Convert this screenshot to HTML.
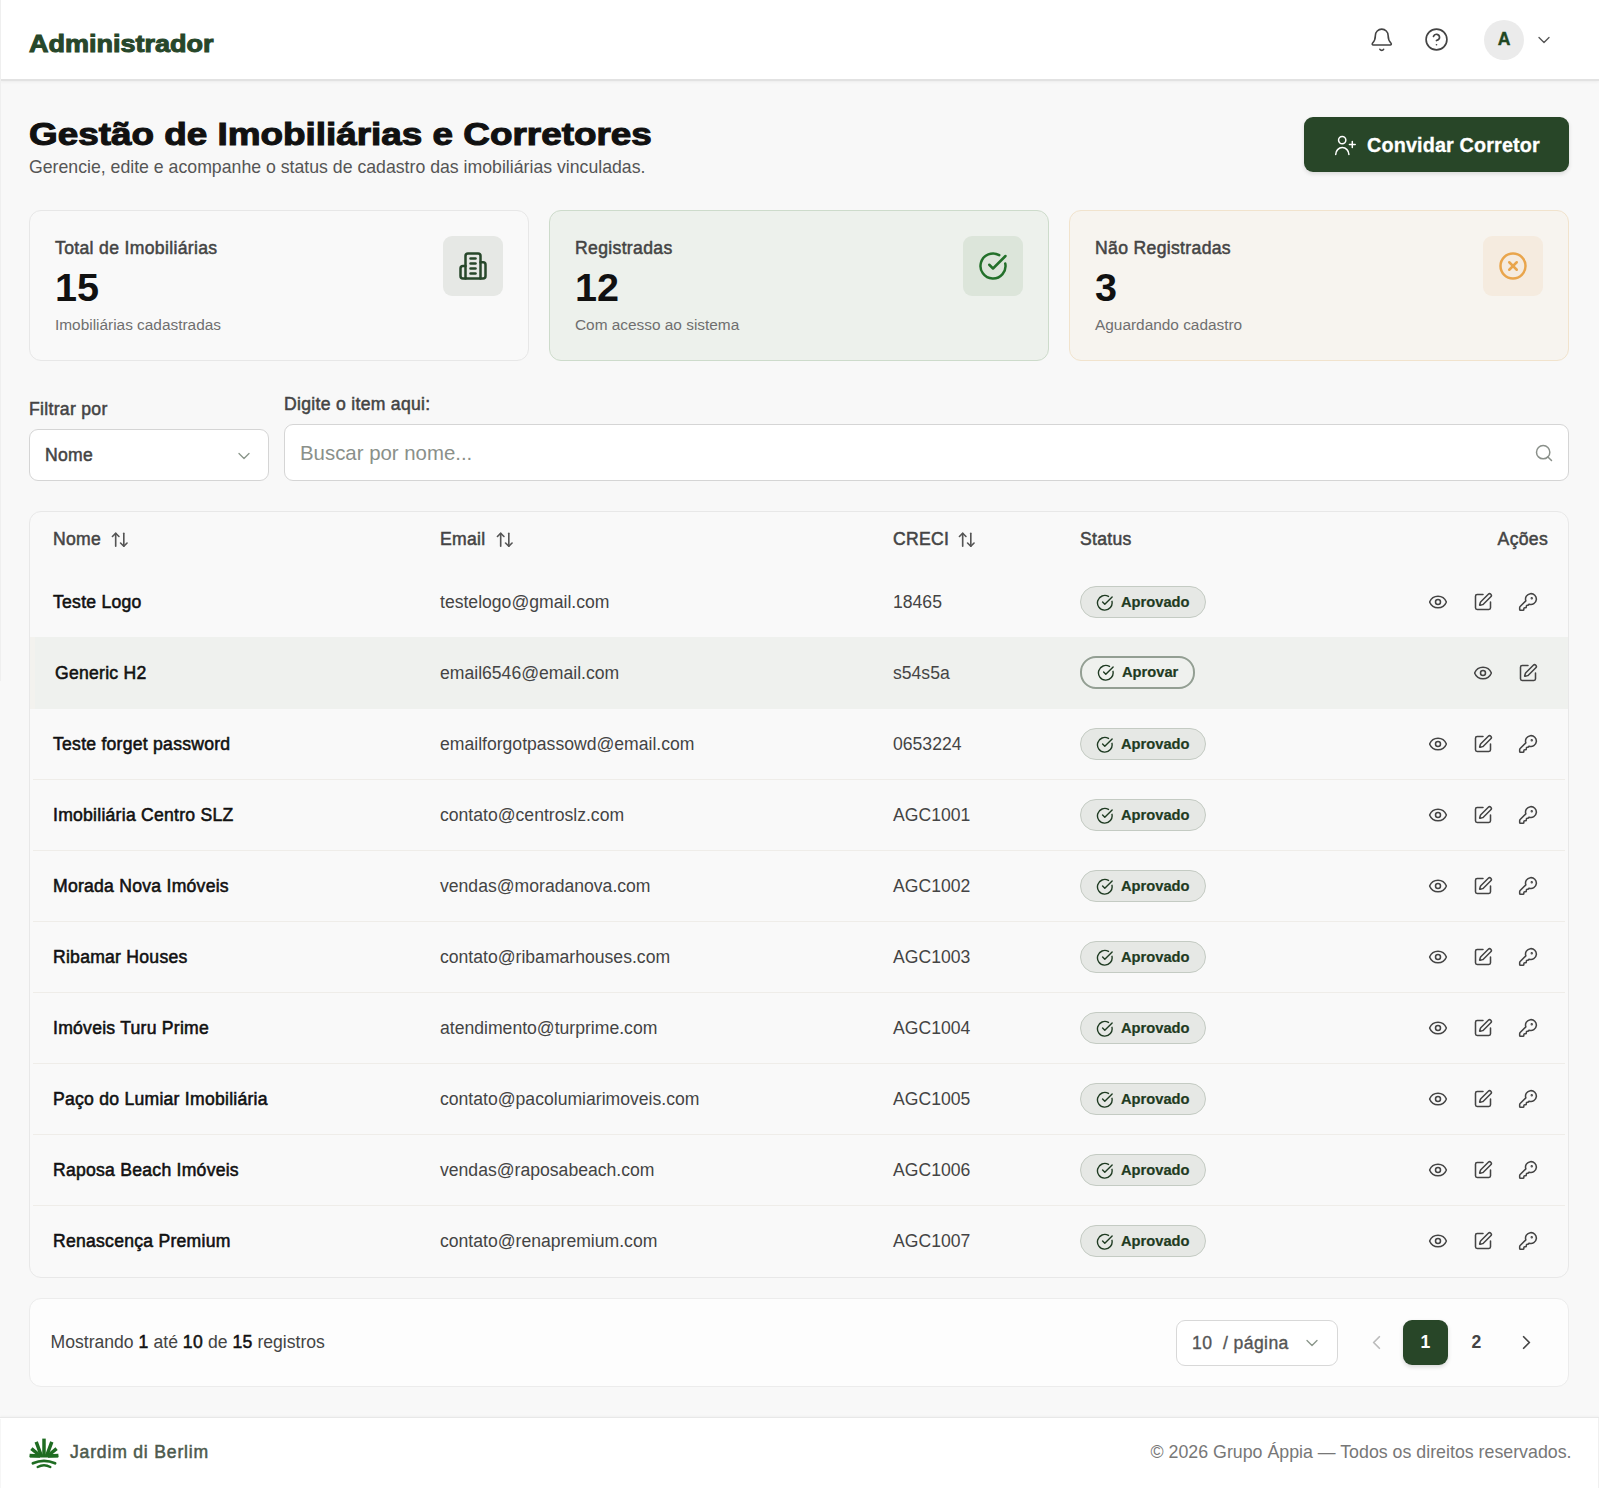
<!DOCTYPE html>
<html lang="pt-BR">
<head>
<meta charset="utf-8">
<title>Gestão de Imobiliárias e Corretores</title>
<style>
*{box-sizing:border-box;margin:0;padding:0}
html,body{width:1599px;height:1488px;overflow:hidden}
body{background:#f8f8f8;font-family:"Liberation Sans",sans-serif;color:#111;position:relative}
.lb{left:0;top:0;width:1px;height:681px;background:#efefef;z-index:5}
.abs{position:absolute}
svg{display:block}
/* header */
.hdr{left:0;top:0;width:1599px;height:81px;background:#fff;border-bottom:2px solid #e2e2e2;box-shadow:0 1px 3px rgba(0,0,0,.05)}
.brand{left:29px;top:29px;font-size:24px;font-weight:700;color:#27472a;white-space:nowrap;transform-origin:0 0;transform:scaleX(1.125);-webkit-text-stroke:1px #27472a;line-height:30px}
.avatar{left:1484px;top:20px;width:40px;height:40px;border-radius:50%;background:#ebebeb;color:#1f4722;font-weight:700;font-size:17.6px;text-align:center;line-height:39px;-webkit-text-stroke:.4px #1f4722}
/* title */
.title{left:29px;top:113.5px;font-size:32px;font-weight:700;color:#111;white-space:nowrap;transform-origin:0 0;transform:scaleX(1.152);-webkit-text-stroke:1.1px #111;line-height:40px}
.sub{left:29px;top:156px;font-size:17.7px;color:#555;white-space:nowrap;line-height:22px}
.btn{left:1304px;top:117px;width:265px;height:55px;border-radius:9px;background:#284628;color:#fff;box-shadow:0 2px 4px rgba(0,0,0,.12)}
.btn .t{position:absolute;left:63px;top:15.5px;font-size:19.8px;font-weight:700;line-height:24px;white-space:nowrap;-webkit-text-stroke:.3px #fff;letter-spacing:.15px}
/* cards */
.card{top:210px;width:500px;height:151px;border-radius:12px;border:1px solid #e7e7e7;background:#f9f9f9}
.card .lbl{position:absolute;left:25px;top:26px;font-size:17.6px;color:#444;line-height:22px;white-space:nowrap;-webkit-text-stroke:.5px #444;letter-spacing:.33px}
.card .num{position:absolute;left:25px;top:54px;font-size:39.6px;font-weight:700;color:#111;line-height:44px}
.card .cap{position:absolute;left:25px;top:104px;font-size:15.4px;color:#6f6f6f;line-height:20px;white-space:nowrap}
.card .ib{position:absolute;left:413px;top:25px;width:60px;height:60px;border-radius:9px;background:#e6e8e5}
.card .ib svg{position:absolute;left:15px;top:15px}
.c2{background:#edf1ec;border-color:#cddbcb}
.c2 .ib{background:#dce5da}
.c3{background:#f7f4ef;border-color:#f1e3cd}
.c3 .ib{background:#f5ebdf}
/* filters */
.flbl{font-size:17.6px;color:#444;line-height:22px;white-space:nowrap;-webkit-text-stroke:.5px #444;letter-spacing:.3px}
.sel{left:29px;top:429px;width:240px;height:52px;border:1px solid #d5d5d5;border-radius:9px;background:#fff}
.sel .t{position:absolute;left:15px;top:13.8px;font-size:17.6px;color:#444;line-height:22px;-webkit-text-stroke:.5px #444;letter-spacing:.3px}
.srch{left:284px;top:424px;width:1285px;height:57px;border:1px solid #d5d5d5;border-radius:9px;background:#fff}
.srch .t{position:absolute;left:15px;top:16px;font-size:20.4px;color:#8a908a;line-height:24px}
/* table */
.tbl{left:29px;top:511px;width:1540px;height:767px;border:1px solid #e8e8e8;border-radius:12px;background:#f9f9f9;overflow:hidden}
.th{position:absolute;top:16px;font-size:17.6px;color:#444;line-height:22px;white-space:nowrap;-webkit-text-stroke:.5px #444;letter-spacing:.3px}
.row{position:absolute;left:0;width:1538px;height:71px}
.sepl{position:absolute;left:3px;width:1532px;height:1px;background:#efede9}
.row.hov{background:#eff1ee;height:72px}
.cell{position:absolute;top:25px;font-size:17.6px;line-height:22px;white-space:nowrap}
.nm{left:23px;color:#111;-webkit-text-stroke:.55px #111;letter-spacing:.25px}
.em{left:410px;color:#444}
.cr{left:863px;color:#444}
.badge{position:absolute;left:1050px;top:20px;height:32px;border:1px solid #c4cbc3;border-radius:16px;background:#e6e8e5;color:#1f3b22;font-weight:700;font-size:14.7px;line-height:30px;padding-left:40px;width:126px;-webkit-text-stroke:.2px #1f3b22}
.badge svg{position:absolute;left:14.5px;top:6.5px}
.badge.ap{border:2px solid #939f93;background:transparent;width:115px;height:33px;padding-left:40px;line-height:29px;top:19px}
.badge.ap svg{left:15px;top:6px}
.act{position:absolute;top:26px}
/* pagination */
.pg{left:29px;top:1298px;width:1540px;height:89px;border:1px solid #ececec;border-radius:12px;background:#fdfdfd}
.pg .info{position:absolute;left:20.5px;top:32px;font-size:17.6px;color:#444;line-height:22px;white-space:nowrap}
.pg .info b{color:#111;font-weight:400;-webkit-text-stroke:.5px #111;letter-spacing:.3px}
.psel{position:absolute;left:1146px;top:21px;width:162px;height:46px;border:1px solid #d8d8d8;border-radius:9px;background:#fff}
.psel .t{position:absolute;left:15px;top:11px;font-size:17.6px;color:#555;line-height:22px;white-space:pre;-webkit-text-stroke:.35px #555;letter-spacing:.4px}
.pnum{position:absolute;top:21px;width:45px;height:45px;border-radius:9px;text-align:center;line-height:45px;font-size:17.6px;font-weight:700;color:#444}
.pnum.on{background:#284628;color:#fff;box-shadow:0 2px 4px rgba(0,0,0,.15)}
/* footer */
.ftr{left:0;top:1417px;width:1599px;height:71px;background:#fff;border-top:1px solid #e8e8e8;box-shadow:0 -1px 2px rgba(0,0,0,.03)}
.ftr .bn{position:absolute;left:70px;top:23px;font-size:17.6px;color:#4d5a4d;line-height:22px;white-space:nowrap;-webkit-text-stroke:.5px #4d5a4d;letter-spacing:.8px}
.ftr .cp{position:absolute;right:27.5px;top:23px;font-size:17.8px;color:#777;line-height:22px;white-space:nowrap}
</style>
</head>
<body>
<!-- HEADER -->
<div class="abs lb"></div>
<div class="abs" style="left:0;top:1419px;width:1px;height:69px;background:#f6f6f6;z-index:5"></div>
<div class="abs hdr"></div>
<div class="abs brand">Administrador</div>
<svg class="abs" style="left:1369px;top:27px" width="25.5" height="25.5" viewBox="0 0 24 24" fill="none" stroke="#444" stroke-width="1.5" stroke-linecap="round" stroke-linejoin="round"><path d="M10.27 21a2 2 0 0 0 3.46 0"/><path d="M3.26 15.33A1 1 0 0 0 4 17h16a1 1 0 0 0 .74-1.67C19.41 13.96 18 12.5 18 8A6 6 0 0 0 6 8c0 4.5-1.41 5.96-2.74 7.33"/></svg>
<svg class="abs" style="left:1424px;top:27px" width="25" height="25" viewBox="0 0 24 24" fill="none" stroke="#444" stroke-width="1.6" stroke-linecap="round" stroke-linejoin="round"><circle cx="12" cy="12" r="10"/><path d="M9.09 9a3 3 0 0 1 5.83 1c0 2-3 3-3 3"/><path d="M12 17h.01"/></svg>
<div class="abs avatar">A</div>
<svg class="abs" style="left:1534px;top:29.8px" width="20" height="20" viewBox="0 0 24 24" fill="none" stroke="#555" stroke-width="1.6" stroke-linecap="round" stroke-linejoin="round"><path d="m6 9 6 6 6-6"/></svg>

<!-- TITLE -->
<div class="abs title">Gestão de Imobiliárias e Corretores</div>
<div class="abs sub">Gerencie, edite e acompanhe o status de cadastro das imobiliárias vinculadas.</div>
<div class="abs btn">
<svg style="position:absolute;left:30px;top:18px" width="22" height="22" viewBox="0 0 22 22" fill="none" stroke="#fff" stroke-width="1.5" stroke-linecap="round" stroke-linejoin="round"><circle cx="8.2" cy="5.1" r="3.65"/><path d="M1.7 19.5A6.6 6.9 0 0 1 14.9 19.5"/><path d="M18.3 6.6v5.8M15.4 9.5h5.8"/></svg>
<div class="t">Convidar Corretor</div>
</div>

<!-- CARDS -->
<div class="abs card" style="left:29px">
<div class="lbl">Total de Imobiliárias</div>
<div class="num">15</div>
<div class="cap">Imobiliárias cadastradas</div>
<div class="ib"><svg width="30" height="30" viewBox="0 0 24 24" fill="none" stroke="#27472a" stroke-width="2" stroke-linecap="round" stroke-linejoin="round"><path d="M6 22V4a2 2 0 0 1 2-2h8a2 2 0 0 1 2 2v18Z"/><path d="M6 12H4a2 2 0 0 0-2 2v6a2 2 0 0 0 2 2h2"/><path d="M18 9h2a2 2 0 0 1 2 2v9a2 2 0 0 1-2 2h-2"/><path d="M10 6h4"/><path d="M10 10h4"/><path d="M10 14h4"/><path d="M10 18h4"/></svg></div>
</div>
<div class="abs card c2" style="left:549px">
<div class="lbl">Registradas</div>
<div class="num">12</div>
<div class="cap">Com acesso ao sistema</div>
<div class="ib"><svg width="30" height="30" viewBox="0 0 24 24" fill="none" stroke="#23702a" stroke-width="2" stroke-linecap="round" stroke-linejoin="round"><path d="M21.801 10A10 10 0 1 1 17 3.335"/><path d="m9 11 3 3L22 4"/></svg></div>
</div>
<div class="abs card c3" style="left:1069px">
<div class="lbl">Não Registradas</div>
<div class="num">3</div>
<div class="cap">Aguardando cadastro</div>
<div class="ib"><svg width="30" height="30" viewBox="0 0 24 24" fill="none" stroke="#e9a54c" stroke-width="2" stroke-linecap="round" stroke-linejoin="round"><circle cx="12" cy="12" r="10"/><path d="m15 9-6 6"/><path d="m9 9 6 6"/></svg></div>
</div>

<!-- FILTERS -->
<div class="abs flbl" style="left:29px;top:398px">Filtrar por</div>
<div class="abs flbl" style="left:284px;top:393px">Digite o item aqui:</div>
<div class="abs sel"><div class="t">Nome</div>
<svg style="position:absolute;left:204px;top:16px" width="20" height="20" viewBox="0 0 24 24" fill="none" stroke="#8a968a" stroke-width="1.6" stroke-linecap="round" stroke-linejoin="round"><path d="m6 9 6 6 6-6"/></svg></div>
<div class="abs srch"><div class="t">Buscar por nome...</div>
<svg style="position:absolute;left:1249px;top:18px" width="20" height="20" viewBox="0 0 24 24" fill="none" stroke="#8a908a" stroke-width="1.8" stroke-linecap="round" stroke-linejoin="round"><circle cx="11" cy="11" r="8"/><path d="m21 21-4.3-4.3"/></svg></div>

<!-- TABLE -->
<div class="abs tbl" id="tbl">
<div class="th" style="left:23px">Nome</div><svg style="position:absolute;left:80.2px;top:18.4px" width="19.5" height="19.5" viewBox="0 0 24 24" fill="none" stroke="#555" stroke-width="2" stroke-linecap="round" stroke-linejoin="round"><path d="m21 16-4 4-4-4"/><path d="M17 20V4"/><path d="m3 8 4-4 4 4"/><path d="M7 4v16"/></svg>
<div class="th" style="left:410px">Email</div><svg style="position:absolute;left:465.2px;top:18.4px" width="19.5" height="19.5" viewBox="0 0 24 24" fill="none" stroke="#555" stroke-width="2" stroke-linecap="round" stroke-linejoin="round"><path d="m21 16-4 4-4-4"/><path d="M17 20V4"/><path d="m3 8 4-4 4 4"/><path d="M7 4v16"/></svg>
<div class="th" style="left:863px">CRECI</div><svg style="position:absolute;left:926.5px;top:18.4px" width="19.5" height="19.5" viewBox="0 0 24 24" fill="none" stroke="#555" stroke-width="2" stroke-linecap="round" stroke-linejoin="round"><path d="m21 16-4 4-4-4"/><path d="M17 20V4"/><path d="m3 8 4-4 4 4"/><path d="M7 4v16"/></svg>
<div class="th" style="left:1050px">Status</div>
<div class="th" style="right:20px">Ações</div>
<div class="row" style="top:54px"><div class="cell nm" style="left:23px">Teste Logo</div><div class="cell em">testelogo@gmail.com</div><div class="cell cr">18465</div><div class="badge"><svg width="17.6" height="17.6" viewBox="0 0 24 24" fill="none" stroke="#1f3b22" stroke-width="1.9" stroke-linecap="round" stroke-linejoin="round"><path d="M21.801 10A10 10 0 1 1 17 3.335"/><path d="m9 11 3 3L22 4"/></svg>Aprovado</div><svg class="act" style="left:1398px" width="20" height="20" viewBox="0 0 24 24" fill="none" stroke="#444" stroke-width="1.85" stroke-linecap="round" stroke-linejoin="round"><path d="M2.062 12.348a1 1 0 0 1 0-.696 10.75 10.75 0 0 1 19.876 0 1 1 0 0 1 0 .696 10.75 10.75 0 0 1-19.876 0"/><circle cx="12" cy="12" r="3"/></svg><svg class="act" style="left:1443px" width="20" height="20" viewBox="0 0 24 24" fill="none" stroke="#444" stroke-width="1.85" stroke-linecap="round" stroke-linejoin="round"><path d="M12 3H5a2 2 0 0 0-2 2v14a2 2 0 0 0 2 2h14a2 2 0 0 0 2-2v-7"/><path d="M18.375 2.625a1 1 0 0 1 3 3l-9.013 9.014a2 2 0 0 1-.853.505l-2.873.84a.5.5 0 0 1-.62-.62l.84-2.873a2 2 0 0 1 .506-.852z"/></svg><svg class="act" style="left:1488px" width="20" height="20" viewBox="0 0 24 24" fill="none" stroke="#444" stroke-width="1.85" stroke-linecap="round" stroke-linejoin="round"><path d="M2.586 17.414A2 2 0 0 0 2 18.828V21a1 1 0 0 0 1 1h3a1 1 0 0 0 1-1v-1a1 1 0 0 1 1-1h1a1 1 0 0 0 1-1v-1a1 1 0 0 1 1-1h.172a2 2 0 0 0 1.414-.586l.814-.814a6.5 6.5 0 1 0-4-4z"/><circle cx="16.5" cy="7.5" r=".5" fill="#444"/></svg></div>
<div class="row hov" style="top:125px"><div style="position:absolute;left:0;top:0;width:5px;height:72px;background:#f3f2ee"></div><div class="cell nm" style="left:25px">Generic H2</div><div class="cell em">email6546@email.com</div><div class="cell cr">s54s5a</div><div class="badge ap"><svg width="17.6" height="17.6" viewBox="0 0 24 24" fill="none" stroke="#1f3b22" stroke-width="1.9" stroke-linecap="round" stroke-linejoin="round"><path d="M21.801 10A10 10 0 1 1 17 3.335"/><path d="m9 11 3 3L22 4"/></svg>Aprovar</div><svg class="act" style="left:1443px" width="20" height="20" viewBox="0 0 24 24" fill="none" stroke="#444" stroke-width="1.85" stroke-linecap="round" stroke-linejoin="round"><path d="M2.062 12.348a1 1 0 0 1 0-.696 10.75 10.75 0 0 1 19.876 0 1 1 0 0 1 0 .696 10.75 10.75 0 0 1-19.876 0"/><circle cx="12" cy="12" r="3"/></svg><svg class="act" style="left:1488px" width="20" height="20" viewBox="0 0 24 24" fill="none" stroke="#444" stroke-width="1.85" stroke-linecap="round" stroke-linejoin="round"><path d="M12 3H5a2 2 0 0 0-2 2v14a2 2 0 0 0 2 2h14a2 2 0 0 0 2-2v-7"/><path d="M18.375 2.625a1 1 0 0 1 3 3l-9.013 9.014a2 2 0 0 1-.853.505l-2.873.84a.5.5 0 0 1-.62-.62l.84-2.873a2 2 0 0 1 .506-.852z"/></svg></div>
<div class="row" style="top:196px"><div class="cell nm" style="left:23px">Teste forget password</div><div class="cell em">emailforgotpassowd@email.com</div><div class="cell cr">0653224</div><div class="badge"><svg width="17.6" height="17.6" viewBox="0 0 24 24" fill="none" stroke="#1f3b22" stroke-width="1.9" stroke-linecap="round" stroke-linejoin="round"><path d="M21.801 10A10 10 0 1 1 17 3.335"/><path d="m9 11 3 3L22 4"/></svg>Aprovado</div><svg class="act" style="left:1398px" width="20" height="20" viewBox="0 0 24 24" fill="none" stroke="#444" stroke-width="1.85" stroke-linecap="round" stroke-linejoin="round"><path d="M2.062 12.348a1 1 0 0 1 0-.696 10.75 10.75 0 0 1 19.876 0 1 1 0 0 1 0 .696 10.75 10.75 0 0 1-19.876 0"/><circle cx="12" cy="12" r="3"/></svg><svg class="act" style="left:1443px" width="20" height="20" viewBox="0 0 24 24" fill="none" stroke="#444" stroke-width="1.85" stroke-linecap="round" stroke-linejoin="round"><path d="M12 3H5a2 2 0 0 0-2 2v14a2 2 0 0 0 2 2h14a2 2 0 0 0 2-2v-7"/><path d="M18.375 2.625a1 1 0 0 1 3 3l-9.013 9.014a2 2 0 0 1-.853.505l-2.873.84a.5.5 0 0 1-.62-.62l.84-2.873a2 2 0 0 1 .506-.852z"/></svg><svg class="act" style="left:1488px" width="20" height="20" viewBox="0 0 24 24" fill="none" stroke="#444" stroke-width="1.85" stroke-linecap="round" stroke-linejoin="round"><path d="M2.586 17.414A2 2 0 0 0 2 18.828V21a1 1 0 0 0 1 1h3a1 1 0 0 0 1-1v-1a1 1 0 0 1 1-1h1a1 1 0 0 0 1-1v-1a1 1 0 0 1 1-1h.172a2 2 0 0 0 1.414-.586l.814-.814a6.5 6.5 0 1 0-4-4z"/><circle cx="16.5" cy="7.5" r=".5" fill="#444"/></svg></div>
<div class="sepl" style="top:267px"></div>
<div class="row" style="top:267px"><div class="cell nm" style="left:23px">Imobiliária Centro SLZ</div><div class="cell em">contato@centroslz.com</div><div class="cell cr">AGC1001</div><div class="badge"><svg width="17.6" height="17.6" viewBox="0 0 24 24" fill="none" stroke="#1f3b22" stroke-width="1.9" stroke-linecap="round" stroke-linejoin="round"><path d="M21.801 10A10 10 0 1 1 17 3.335"/><path d="m9 11 3 3L22 4"/></svg>Aprovado</div><svg class="act" style="left:1398px" width="20" height="20" viewBox="0 0 24 24" fill="none" stroke="#444" stroke-width="1.85" stroke-linecap="round" stroke-linejoin="round"><path d="M2.062 12.348a1 1 0 0 1 0-.696 10.75 10.75 0 0 1 19.876 0 1 1 0 0 1 0 .696 10.75 10.75 0 0 1-19.876 0"/><circle cx="12" cy="12" r="3"/></svg><svg class="act" style="left:1443px" width="20" height="20" viewBox="0 0 24 24" fill="none" stroke="#444" stroke-width="1.85" stroke-linecap="round" stroke-linejoin="round"><path d="M12 3H5a2 2 0 0 0-2 2v14a2 2 0 0 0 2 2h14a2 2 0 0 0 2-2v-7"/><path d="M18.375 2.625a1 1 0 0 1 3 3l-9.013 9.014a2 2 0 0 1-.853.505l-2.873.84a.5.5 0 0 1-.62-.62l.84-2.873a2 2 0 0 1 .506-.852z"/></svg><svg class="act" style="left:1488px" width="20" height="20" viewBox="0 0 24 24" fill="none" stroke="#444" stroke-width="1.85" stroke-linecap="round" stroke-linejoin="round"><path d="M2.586 17.414A2 2 0 0 0 2 18.828V21a1 1 0 0 0 1 1h3a1 1 0 0 0 1-1v-1a1 1 0 0 1 1-1h1a1 1 0 0 0 1-1v-1a1 1 0 0 1 1-1h.172a2 2 0 0 0 1.414-.586l.814-.814a6.5 6.5 0 1 0-4-4z"/><circle cx="16.5" cy="7.5" r=".5" fill="#444"/></svg></div>
<div class="sepl" style="top:338px"></div>
<div class="row" style="top:338px"><div class="cell nm" style="left:23px">Morada Nova Imóveis</div><div class="cell em">vendas@moradanova.com</div><div class="cell cr">AGC1002</div><div class="badge"><svg width="17.6" height="17.6" viewBox="0 0 24 24" fill="none" stroke="#1f3b22" stroke-width="1.9" stroke-linecap="round" stroke-linejoin="round"><path d="M21.801 10A10 10 0 1 1 17 3.335"/><path d="m9 11 3 3L22 4"/></svg>Aprovado</div><svg class="act" style="left:1398px" width="20" height="20" viewBox="0 0 24 24" fill="none" stroke="#444" stroke-width="1.85" stroke-linecap="round" stroke-linejoin="round"><path d="M2.062 12.348a1 1 0 0 1 0-.696 10.75 10.75 0 0 1 19.876 0 1 1 0 0 1 0 .696 10.75 10.75 0 0 1-19.876 0"/><circle cx="12" cy="12" r="3"/></svg><svg class="act" style="left:1443px" width="20" height="20" viewBox="0 0 24 24" fill="none" stroke="#444" stroke-width="1.85" stroke-linecap="round" stroke-linejoin="round"><path d="M12 3H5a2 2 0 0 0-2 2v14a2 2 0 0 0 2 2h14a2 2 0 0 0 2-2v-7"/><path d="M18.375 2.625a1 1 0 0 1 3 3l-9.013 9.014a2 2 0 0 1-.853.505l-2.873.84a.5.5 0 0 1-.62-.62l.84-2.873a2 2 0 0 1 .506-.852z"/></svg><svg class="act" style="left:1488px" width="20" height="20" viewBox="0 0 24 24" fill="none" stroke="#444" stroke-width="1.85" stroke-linecap="round" stroke-linejoin="round"><path d="M2.586 17.414A2 2 0 0 0 2 18.828V21a1 1 0 0 0 1 1h3a1 1 0 0 0 1-1v-1a1 1 0 0 1 1-1h1a1 1 0 0 0 1-1v-1a1 1 0 0 1 1-1h.172a2 2 0 0 0 1.414-.586l.814-.814a6.5 6.5 0 1 0-4-4z"/><circle cx="16.5" cy="7.5" r=".5" fill="#444"/></svg></div>
<div class="sepl" style="top:409px"></div>
<div class="row" style="top:409px"><div class="cell nm" style="left:23px">Ribamar Houses</div><div class="cell em">contato@ribamarhouses.com</div><div class="cell cr">AGC1003</div><div class="badge"><svg width="17.6" height="17.6" viewBox="0 0 24 24" fill="none" stroke="#1f3b22" stroke-width="1.9" stroke-linecap="round" stroke-linejoin="round"><path d="M21.801 10A10 10 0 1 1 17 3.335"/><path d="m9 11 3 3L22 4"/></svg>Aprovado</div><svg class="act" style="left:1398px" width="20" height="20" viewBox="0 0 24 24" fill="none" stroke="#444" stroke-width="1.85" stroke-linecap="round" stroke-linejoin="round"><path d="M2.062 12.348a1 1 0 0 1 0-.696 10.75 10.75 0 0 1 19.876 0 1 1 0 0 1 0 .696 10.75 10.75 0 0 1-19.876 0"/><circle cx="12" cy="12" r="3"/></svg><svg class="act" style="left:1443px" width="20" height="20" viewBox="0 0 24 24" fill="none" stroke="#444" stroke-width="1.85" stroke-linecap="round" stroke-linejoin="round"><path d="M12 3H5a2 2 0 0 0-2 2v14a2 2 0 0 0 2 2h14a2 2 0 0 0 2-2v-7"/><path d="M18.375 2.625a1 1 0 0 1 3 3l-9.013 9.014a2 2 0 0 1-.853.505l-2.873.84a.5.5 0 0 1-.62-.62l.84-2.873a2 2 0 0 1 .506-.852z"/></svg><svg class="act" style="left:1488px" width="20" height="20" viewBox="0 0 24 24" fill="none" stroke="#444" stroke-width="1.85" stroke-linecap="round" stroke-linejoin="round"><path d="M2.586 17.414A2 2 0 0 0 2 18.828V21a1 1 0 0 0 1 1h3a1 1 0 0 0 1-1v-1a1 1 0 0 1 1-1h1a1 1 0 0 0 1-1v-1a1 1 0 0 1 1-1h.172a2 2 0 0 0 1.414-.586l.814-.814a6.5 6.5 0 1 0-4-4z"/><circle cx="16.5" cy="7.5" r=".5" fill="#444"/></svg></div>
<div class="sepl" style="top:480px"></div>
<div class="row" style="top:480px"><div class="cell nm" style="left:23px">Imóveis Turu Prime</div><div class="cell em">atendimento@turprime.com</div><div class="cell cr">AGC1004</div><div class="badge"><svg width="17.6" height="17.6" viewBox="0 0 24 24" fill="none" stroke="#1f3b22" stroke-width="1.9" stroke-linecap="round" stroke-linejoin="round"><path d="M21.801 10A10 10 0 1 1 17 3.335"/><path d="m9 11 3 3L22 4"/></svg>Aprovado</div><svg class="act" style="left:1398px" width="20" height="20" viewBox="0 0 24 24" fill="none" stroke="#444" stroke-width="1.85" stroke-linecap="round" stroke-linejoin="round"><path d="M2.062 12.348a1 1 0 0 1 0-.696 10.75 10.75 0 0 1 19.876 0 1 1 0 0 1 0 .696 10.75 10.75 0 0 1-19.876 0"/><circle cx="12" cy="12" r="3"/></svg><svg class="act" style="left:1443px" width="20" height="20" viewBox="0 0 24 24" fill="none" stroke="#444" stroke-width="1.85" stroke-linecap="round" stroke-linejoin="round"><path d="M12 3H5a2 2 0 0 0-2 2v14a2 2 0 0 0 2 2h14a2 2 0 0 0 2-2v-7"/><path d="M18.375 2.625a1 1 0 0 1 3 3l-9.013 9.014a2 2 0 0 1-.853.505l-2.873.84a.5.5 0 0 1-.62-.62l.84-2.873a2 2 0 0 1 .506-.852z"/></svg><svg class="act" style="left:1488px" width="20" height="20" viewBox="0 0 24 24" fill="none" stroke="#444" stroke-width="1.85" stroke-linecap="round" stroke-linejoin="round"><path d="M2.586 17.414A2 2 0 0 0 2 18.828V21a1 1 0 0 0 1 1h3a1 1 0 0 0 1-1v-1a1 1 0 0 1 1-1h1a1 1 0 0 0 1-1v-1a1 1 0 0 1 1-1h.172a2 2 0 0 0 1.414-.586l.814-.814a6.5 6.5 0 1 0-4-4z"/><circle cx="16.5" cy="7.5" r=".5" fill="#444"/></svg></div>
<div class="sepl" style="top:551px"></div>
<div class="row" style="top:551px"><div class="cell nm" style="left:23px">Paço do Lumiar Imobiliária</div><div class="cell em">contato@pacolumiarimoveis.com</div><div class="cell cr">AGC1005</div><div class="badge"><svg width="17.6" height="17.6" viewBox="0 0 24 24" fill="none" stroke="#1f3b22" stroke-width="1.9" stroke-linecap="round" stroke-linejoin="round"><path d="M21.801 10A10 10 0 1 1 17 3.335"/><path d="m9 11 3 3L22 4"/></svg>Aprovado</div><svg class="act" style="left:1398px" width="20" height="20" viewBox="0 0 24 24" fill="none" stroke="#444" stroke-width="1.85" stroke-linecap="round" stroke-linejoin="round"><path d="M2.062 12.348a1 1 0 0 1 0-.696 10.75 10.75 0 0 1 19.876 0 1 1 0 0 1 0 .696 10.75 10.75 0 0 1-19.876 0"/><circle cx="12" cy="12" r="3"/></svg><svg class="act" style="left:1443px" width="20" height="20" viewBox="0 0 24 24" fill="none" stroke="#444" stroke-width="1.85" stroke-linecap="round" stroke-linejoin="round"><path d="M12 3H5a2 2 0 0 0-2 2v14a2 2 0 0 0 2 2h14a2 2 0 0 0 2-2v-7"/><path d="M18.375 2.625a1 1 0 0 1 3 3l-9.013 9.014a2 2 0 0 1-.853.505l-2.873.84a.5.5 0 0 1-.62-.62l.84-2.873a2 2 0 0 1 .506-.852z"/></svg><svg class="act" style="left:1488px" width="20" height="20" viewBox="0 0 24 24" fill="none" stroke="#444" stroke-width="1.85" stroke-linecap="round" stroke-linejoin="round"><path d="M2.586 17.414A2 2 0 0 0 2 18.828V21a1 1 0 0 0 1 1h3a1 1 0 0 0 1-1v-1a1 1 0 0 1 1-1h1a1 1 0 0 0 1-1v-1a1 1 0 0 1 1-1h.172a2 2 0 0 0 1.414-.586l.814-.814a6.5 6.5 0 1 0-4-4z"/><circle cx="16.5" cy="7.5" r=".5" fill="#444"/></svg></div>
<div class="sepl" style="top:622px"></div>
<div class="row" style="top:622px"><div class="cell nm" style="left:23px">Raposa Beach Imóveis</div><div class="cell em">vendas@raposabeach.com</div><div class="cell cr">AGC1006</div><div class="badge"><svg width="17.6" height="17.6" viewBox="0 0 24 24" fill="none" stroke="#1f3b22" stroke-width="1.9" stroke-linecap="round" stroke-linejoin="round"><path d="M21.801 10A10 10 0 1 1 17 3.335"/><path d="m9 11 3 3L22 4"/></svg>Aprovado</div><svg class="act" style="left:1398px" width="20" height="20" viewBox="0 0 24 24" fill="none" stroke="#444" stroke-width="1.85" stroke-linecap="round" stroke-linejoin="round"><path d="M2.062 12.348a1 1 0 0 1 0-.696 10.75 10.75 0 0 1 19.876 0 1 1 0 0 1 0 .696 10.75 10.75 0 0 1-19.876 0"/><circle cx="12" cy="12" r="3"/></svg><svg class="act" style="left:1443px" width="20" height="20" viewBox="0 0 24 24" fill="none" stroke="#444" stroke-width="1.85" stroke-linecap="round" stroke-linejoin="round"><path d="M12 3H5a2 2 0 0 0-2 2v14a2 2 0 0 0 2 2h14a2 2 0 0 0 2-2v-7"/><path d="M18.375 2.625a1 1 0 0 1 3 3l-9.013 9.014a2 2 0 0 1-.853.505l-2.873.84a.5.5 0 0 1-.62-.62l.84-2.873a2 2 0 0 1 .506-.852z"/></svg><svg class="act" style="left:1488px" width="20" height="20" viewBox="0 0 24 24" fill="none" stroke="#444" stroke-width="1.85" stroke-linecap="round" stroke-linejoin="round"><path d="M2.586 17.414A2 2 0 0 0 2 18.828V21a1 1 0 0 0 1 1h3a1 1 0 0 0 1-1v-1a1 1 0 0 1 1-1h1a1 1 0 0 0 1-1v-1a1 1 0 0 1 1-1h.172a2 2 0 0 0 1.414-.586l.814-.814a6.5 6.5 0 1 0-4-4z"/><circle cx="16.5" cy="7.5" r=".5" fill="#444"/></svg></div>
<div class="sepl" style="top:693px"></div>
<div class="row" style="top:693px"><div class="cell nm" style="left:23px">Renascença Premium</div><div class="cell em">contato@renapremium.com</div><div class="cell cr">AGC1007</div><div class="badge"><svg width="17.6" height="17.6" viewBox="0 0 24 24" fill="none" stroke="#1f3b22" stroke-width="1.9" stroke-linecap="round" stroke-linejoin="round"><path d="M21.801 10A10 10 0 1 1 17 3.335"/><path d="m9 11 3 3L22 4"/></svg>Aprovado</div><svg class="act" style="left:1398px" width="20" height="20" viewBox="0 0 24 24" fill="none" stroke="#444" stroke-width="1.85" stroke-linecap="round" stroke-linejoin="round"><path d="M2.062 12.348a1 1 0 0 1 0-.696 10.75 10.75 0 0 1 19.876 0 1 1 0 0 1 0 .696 10.75 10.75 0 0 1-19.876 0"/><circle cx="12" cy="12" r="3"/></svg><svg class="act" style="left:1443px" width="20" height="20" viewBox="0 0 24 24" fill="none" stroke="#444" stroke-width="1.85" stroke-linecap="round" stroke-linejoin="round"><path d="M12 3H5a2 2 0 0 0-2 2v14a2 2 0 0 0 2 2h14a2 2 0 0 0 2-2v-7"/><path d="M18.375 2.625a1 1 0 0 1 3 3l-9.013 9.014a2 2 0 0 1-.853.505l-2.873.84a.5.5 0 0 1-.62-.62l.84-2.873a2 2 0 0 1 .506-.852z"/></svg><svg class="act" style="left:1488px" width="20" height="20" viewBox="0 0 24 24" fill="none" stroke="#444" stroke-width="1.85" stroke-linecap="round" stroke-linejoin="round"><path d="M2.586 17.414A2 2 0 0 0 2 18.828V21a1 1 0 0 0 1 1h3a1 1 0 0 0 1-1v-1a1 1 0 0 1 1-1h1a1 1 0 0 0 1-1v-1a1 1 0 0 1 1-1h.172a2 2 0 0 0 1.414-.586l.814-.814a6.5 6.5 0 1 0-4-4z"/><circle cx="16.5" cy="7.5" r=".5" fill="#444"/></svg></div>
</div>

<!-- PAGINATION -->
<div class="abs pg">
<div class="info">Mostrando <b>1</b> até <b>10</b> de <b>15</b> registros</div>
<div class="psel"><div class="t">10  / página</div>
<svg style="position:absolute;left:125px;top:12px" width="20" height="20" viewBox="0 0 24 24" fill="none" stroke="#8a968a" stroke-width="1.6" stroke-linecap="round" stroke-linejoin="round"><path d="m6 9 6 6 6-6"/></svg></div>
<svg style="position:absolute;left:1335px;top:32px" width="23" height="23" viewBox="0 0 24 24" fill="none" stroke="#bbb" stroke-width="1.8" stroke-linecap="round" stroke-linejoin="round"><path d="m15 18-6-6 6-6"/></svg>
<div class="pnum on" style="left:1373px">1</div>
<div class="pnum" style="left:1424px">2</div>
<svg style="position:absolute;left:1485px;top:32px" width="23" height="23" viewBox="0 0 24 24" fill="none" stroke="#444" stroke-width="1.8" stroke-linecap="round" stroke-linejoin="round"><path d="m9 18 6-6-6-6"/></svg>
</div>

<!-- FOOTER -->
<div class="abs" style="left:1598px;top:1418px;width:1px;height:70px;background:#f0f0f0;z-index:5"></div>
<div class="abs ftr">
<svg style="position:absolute;left:25px;top:17px" width="38" height="38" viewBox="0 0 38 38" fill="none" stroke="#1f6c22">
<g stroke-width="3.5" stroke-linecap="butt"><path d="M19 3.6V22"/><path d="M11.2 6.8 16.6 21.5M26.8 6.8 21.4 21.5"/><path d="M6.4 13.6 15.4 21M31.6 13.6 22.6 21"/><path d="M4.6 20.6 15 21M33.4 20.6 23 21"/></g>
<path d="M13 19.5L25 19.5L33.5 20.8L33 22.6L5 22.6L4.5 20.8Z" fill="#1f6c22" stroke="none"/>
<path d="M7.9 28.3Q19 23.5 30.1 28.3" stroke-width="2.8" stroke-linecap="round"/><path d="M12.7 32Q19 28.6 25.3 32" stroke-width="2.5" stroke-linecap="round"/></svg>
<div class="bn">Jardim di Berlim</div>
<div class="cp">© 2026 Grupo Áppia — Todos os direitos reservados.</div>
</div>
</body>
</html>
